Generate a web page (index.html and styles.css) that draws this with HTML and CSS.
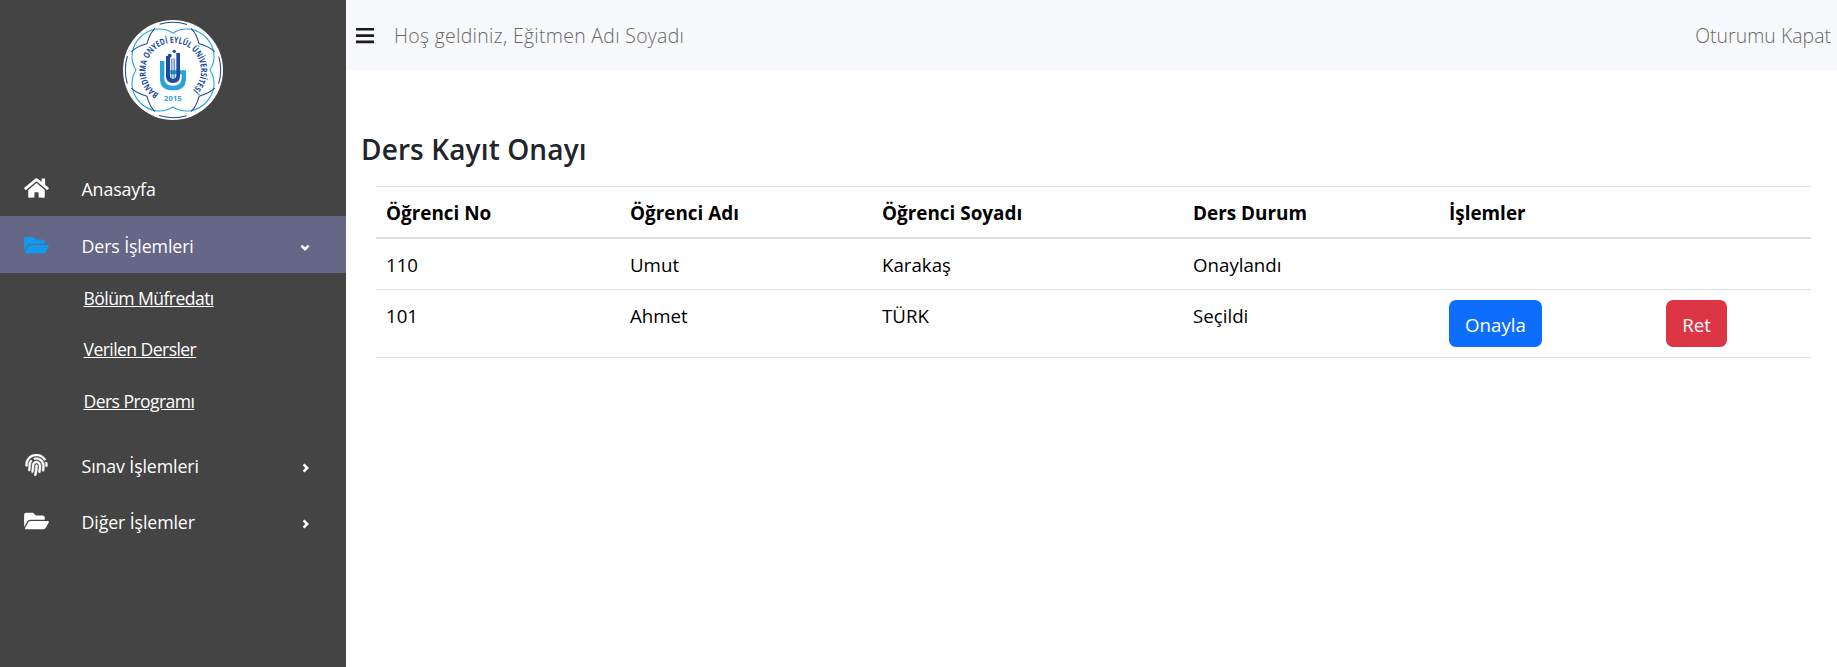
FILE: index.html
```html
<!DOCTYPE html>
<html lang="tr">
<head>
<meta charset="utf-8">
<title>Ders Kayıt Onayı</title>
<link rel="stylesheet" href="styles.css">
</head>
<body>
<svg class="defs" aria-hidden="true">
  <symbol id="folder" viewBox="0 0 576 512"><path d="M572.694 292.093L500.27 416.248A63.997 63.997 0 0 1 444.989 448H45.025c-18.523 0-30.064-20.093-20.731-36.093l72.424-124.155A64 64 0 0 1 152 256h399.964c18.523 0 30.064 20.093 20.73 36.093zM152 224h328v-48c0-26.51-21.49-48-48-48H272l-64-64H48C21.49 64 0 85.49 0 112v278.046l69.077-118.418C86.214 242.25 117.989 224 152 224z"/></symbol>
  <symbol id="chevron" viewBox="0 0 10 10"><path d="M2.6 1.4 6.2 5 2.6 8.6" fill="none" stroke="currentColor" stroke-width="2.5"/></symbol>
</svg>
<div class="layout">
  <aside class="sidebar">
    <div class="brand">
      <svg class="logo" viewBox="-150 -150 300 300">
        <circle r="150" fill="#fff"/>
        <g fill="none" stroke-width="3.2">
          <circle r="143" stroke="#1b4b9b" stroke-dasharray="84 140.6" stroke-dashoffset="42"/>
          <path stroke="#29a3dc" d="M0-111C70-155 155-70 111 0C155 70 70 155 0 111C-70 155-155 70-111 0C-155-70-70-155 0-111Z"/>
          <path stroke="#1b4b9b" transform="rotate(45)" d="M-50-127Q-28-127 0-111Q28-127 50-127M-50 127Q-28 127 0 111Q28 127 50 127M127-50Q127-28 111 0Q127 28 127 50M-127-50Q-127-28-111 0Q-127 28-127 50"/>
        </g>
        <path id="ring" fill="none" d="M-43 72A83 83 0 1 1 53 66"/>
        <text class="logo-name"><textPath href="#ring" textLength="410" lengthAdjust="spacingAndGlyphs">BANDIRMA ONYEDİ EYLÜL ÜNİVERSİTESİ</textPath></text>
        <path fill="#29a3dc" d="M-39-27h13V24Q-26 47 0 47T26 24V13H-8V1H39V26Q39 61 0 61T-39 26Z"/>
        <path fill="#1b4b9b" d="M-21-42h12V18Q-8 27 0 27T10 18V-51H21V19Q21 39 0 39T-21 19Z"/>
        <path stroke="#1b4b9b" stroke-width="2" d="M-5-34V28M0-36V28M5-34V28"/>
        <circle cx="-10" cy="-43" r="6" fill="#1b4b9b"/><circle cx="4" cy="-56" r="5" fill="#1b4b9b"/>
        <text class="logo-year" x="0" y="92" text-anchor="middle">2015</text>
      </svg>
    </div>
    <nav class="menu">
      <a class="item">
        <svg class="icon" viewBox="0 0 576 512"><path d="M280.37 148.26L96 300.11V464a16 16 0 0 0 16 16l112.06-.29a16 16 0 0 0 15.92-16V368a16 16 0 0 1 16-16h64a16 16 0 0 1 16 16v95.64a16 16 0 0 0 16 16.05L464 480a16 16 0 0 0 16-16V300L295.67 148.26a12.19 12.19 0 0 0-15.3 0zM571.6 251.47L488 182.56V44.05a12 12 0 0 0-12-12h-56a12 12 0 0 0-12 12v72.61L318.47 43a48 48 0 0 0-61 0L4.34 251.47a12 12 0 0 0-1.6 16.9l25.5 31A12 12 0 0 0 45.15 301l235.22-193.74a12.19 12.19 0 0 1 15.3 0L530.9 301a12 12 0 0 0 16.9-1.6l25.5-31a12 12 0 0 0-1.7-16.93z"/></svg>
        <span class="label">Anasayfa</span>
      </a>
      <a class="item active">
        <svg class="icon"><use href="#folder"/></svg>
        <span class="label">Ders İşlemleri</span>
        <svg class="chevron down"><use href="#chevron"/></svg>
      </a>
      <div class="submenu">
        <a class="sub">Bölüm Müfredatı</a>
        <a class="sub">Verilen Dersler</a>
        <a class="sub">Ders Programı</a>
      </div>
      <a class="item">
        <svg class="icon" viewBox="0 0 512 512"><path stroke="currentColor" stroke-width="8" d="M256.12 245.96c-13.25 0-24 10.74-24 24 1.14 72.25-8.14 141.9-27.7 211.55-2.73 9.72 2.15 30.49 23.12 30.49 10.48 0 20.11-6.92 23.09-17.52 13.53-47.91 31.04-125.41 29.48-224.52.01-13.25-10.73-24-23.99-24zm-.86-81.73C194 164.16 151.25 211.3 152.1 265.32c.75 47.94-3.75 95.91-13.37 142.55-2.69 12.98 5.67 25.69 18.64 28.36 13.05 2.67 25.67-5.66 28.36-18.64 10.34-50.09 15.17-101.58 14.37-153.02-.41-25.95 19.92-52.49 54.45-52.34 31.31.47 57.15 25.34 57.62 55.47.77 48.05-2.81 96.33-10.61 143.55-2.17 13.06 6.69 25.42 19.76 27.58 19.97 3.33 26.81-15.1 27.58-19.77 8.28-50.03 12.06-101.21 11.27-152.11-.88-55.8-47.94-101.88-104.91-102.72zm-110.69-19.78c-10.3-8.34-25.37-6.8-33.76 3.48-25.62 31.5-39.39 71.28-38.75 112 .59 37.58-2.47 75.27-9.11 112.05-2.34 13.05 6.31 25.53 19.36 27.89 20.11 3.5 27.07-14.81 27.89-19.36 7.19-39.84 10.5-80.66 9.86-121.33-.47-29.88 9.2-57.88 28-80.97 8.35-10.28 6.79-25.39-3.49-33.76zm109.47-62.33c-15.41-.41-30.87 1.44-45.78 4.97-12.89 3.06-20.87 15.98-17.83 28.89 3.06 12.89 16 20.83 28.89 17.83 11.05-2.61 22.47-3.77 34-3.69 75.43 1.13 137.73 61.5 138.88 134.58.59 37.88-1.28 76.11-5.58 113.63-1.5 13.17 7.95 25.08 21.11 26.58 16.72 1.95 25.51-11.88 26.58-21.11a929.06 929.06 0 0 0 5.89-119.85c-1.56-98.75-85.07-180.33-186.16-181.83zm252.07 121.45c-2.86-12.92-15.51-21.2-28.61-18.27-12.94 2.86-21.12 15.66-18.26 28.61 4.71 21.41 4.91 37.41 4.7 61.6-.11 13.27 10.55 24.09 23.8 24.2h.2c13.17 0 23.89-10.61 24-23.8.18-22.18.4-44.11-5.83-72.34zm-40.12-90.72C417.29 43.46 337.6 1.29 252.81.02 183.02-.82 118.47 24.91 70.46 72.94 24.09 119.37-.9 181.04.14 246.65l-.12 21.47c-.39 13.25 10.03 24.31 23.28 24.69.23.02.48.02.72.02 12.92 0 23.59-10.3 23.97-23.3l.16-23.64c-.83-52.5 19.16-101.86 56.28-139 38.76-38.8 91.34-59.67 147.68-58.86 69.45 1.03 134.73 35.56 174.62 92.39 7.61 10.86 22.56 13.45 33.42 5.86 10.84-7.62 13.46-22.59 5.84-33.43z"/></svg>
        <span class="label">Sınav İşlemleri</span>
        <svg class="chevron"><use href="#chevron"/></svg>
      </a>
      <a class="item">
        <svg class="icon"><use href="#folder"/></svg>
        <span class="label">Diğer İşlemler</span>
        <svg class="chevron"><use href="#chevron"/></svg>
      </a>
    </nav>
  </aside>
  <div class="page">
    <header class="topbar">
      <svg class="bars" viewBox="0 0 18 16"><path d="M0 0h18v2.6H0zM0 6.3h18v2.6H0zM0 12.6h18v2.6H0z"/></svg>
      <span class="welcome">Hoş geldiniz, Eğitmen Adı Soyadı</span>
      <a class="logout">Oturumu Kapat</a>
    </header>
    <main class="content">
      <h1 class="title">Ders Kayıt Onayı</h1>
      <table class="table">
        <colgroup><col class="c-no"><col class="c-name"><col class="c-surname"><col class="c-state"><col class="c-approve"><col class="c-reject"></colgroup>
        <thead>
          <tr><th>Öğrenci No</th><th>Öğrenci Adı</th><th>Öğrenci Soyadı</th><th>Ders Durum</th><th>İşlemler</th><th></th></tr>
        </thead>
        <tbody>
          <tr><td>110</td><td>Umut</td><td>Karakaş</td><td>Onaylandı</td><td></td><td></td></tr>
          <tr class="pending"><td>101</td><td>Ahmet</td><td>TÜRK</td><td>Seçildi</td><td><button class="btn approve">Onayla</button></td><td><button class="btn reject">Ret</button></td></tr>
        </tbody>
      </table>
    </main>
  </div>
</div>
</body>
</html>
```
FILE: styles.css
```css
* { box-sizing: border-box; }
body { margin: 0; background: #fff; color: #212529; font-family: "Open Sans", "Noto Sans", sans-serif; font-size: 18.5px; }
.defs { position: absolute; width: 0; height: 0; }
.layout { display: flex; height: 667px; overflow: hidden; }

.sidebar { width: 346px; flex: none; background: #444; color: #fff; }
.brand { height: 160px; padding-top: 20px; display: flex; justify-content: center; align-items: flex-start; }
.logo { width: 100px; height: 100px; }
.logo-name { font: 700 26px "Open Sans", sans-serif; fill: #1b4b9b; }
.logo-year { font: 700 22px "Open Sans", sans-serif; fill: #29a3dc; letter-spacing: 1px; }

.item { display: flex; align-items: center; height: 56px; padding: 0 35px 0 24px; font-size: 17.8px; letter-spacing: -0.12px; }
.item.active { height: 57px; background: #666686; }
.item.active .icon { color: #0f9af0; }
.icon { width: 25px; height: 22px; fill: currentColor; flex: none; }
.label { flex: 1; padding: 2px 0 0 32.5px; line-height: 24px; }
.chevron { width: 10px; height: 10px; margin-top: 6px; }
.active .chevron { margin-right: 1px; }
.chevron.down { transform: rotate(90deg); }
.submenu { display: flex; flex-direction: column; height: 164px; padding: 0 0 10px 83.5px; }
.sub { height: 51.5px; line-height: 51px; font-size: 17.6px; letter-spacing: -0.58px; text-decoration: underline; }

.page { flex: 1; min-width: 0; }
.topbar { display: flex; align-items: center; height: 70px; padding: 0 6px 0 10px; background: #f8f9fc; color: #686868; font-size: 19.4px; font-weight: 300; }
.bars { width: 18px; height: 16px; fill: #1c1c1c; margin-top: 1px; }
.welcome { padding: 1px 0 0 20px; letter-spacing: 0.32px; }
.logout { margin-left: auto; padding-top: 1px; letter-spacing: 0.05px; }
.content { padding: 59px 26px 0 15px; }
.title { margin: 0; height: 57px; line-height: 40px; font-size: 28px; font-weight: 600; letter-spacing: 0.12px; }
.table { width: 1435px; margin-left: 15px; table-layout: fixed; border-collapse: separate; border-spacing: 0; color: #000; border-top: 1px solid #dee2e6; }
.c-no { width: 244px; } .c-name { width: 252px; } .c-surname { width: 311px; } .c-state { width: 256px; } .c-approve { width: 217px; } .c-reject { width: 155px; }
.table th, .table td { padding: 11px 10px 9px; height: 51px; line-height: 30px; text-align: left; vertical-align: top; border-bottom: 1px solid #dee2e6; font-size: 18.7px; }
.table th { height: 52px; border-bottom-width: 2px; font-size: 18.9px; font-weight: 700; }
.table .pending td { height: 68px; }
.table .pending td:nth-child(n+5) { padding-top: 10px; }
.btn { display: block; height: 47px; border: 0; border-radius: 7px; padding: 2px 0 0; color: #fff; font: inherit; }
.approve { width: 93px; background: #0d6efd; }
.reject { width: 61px; background: #dc3545; }
```
